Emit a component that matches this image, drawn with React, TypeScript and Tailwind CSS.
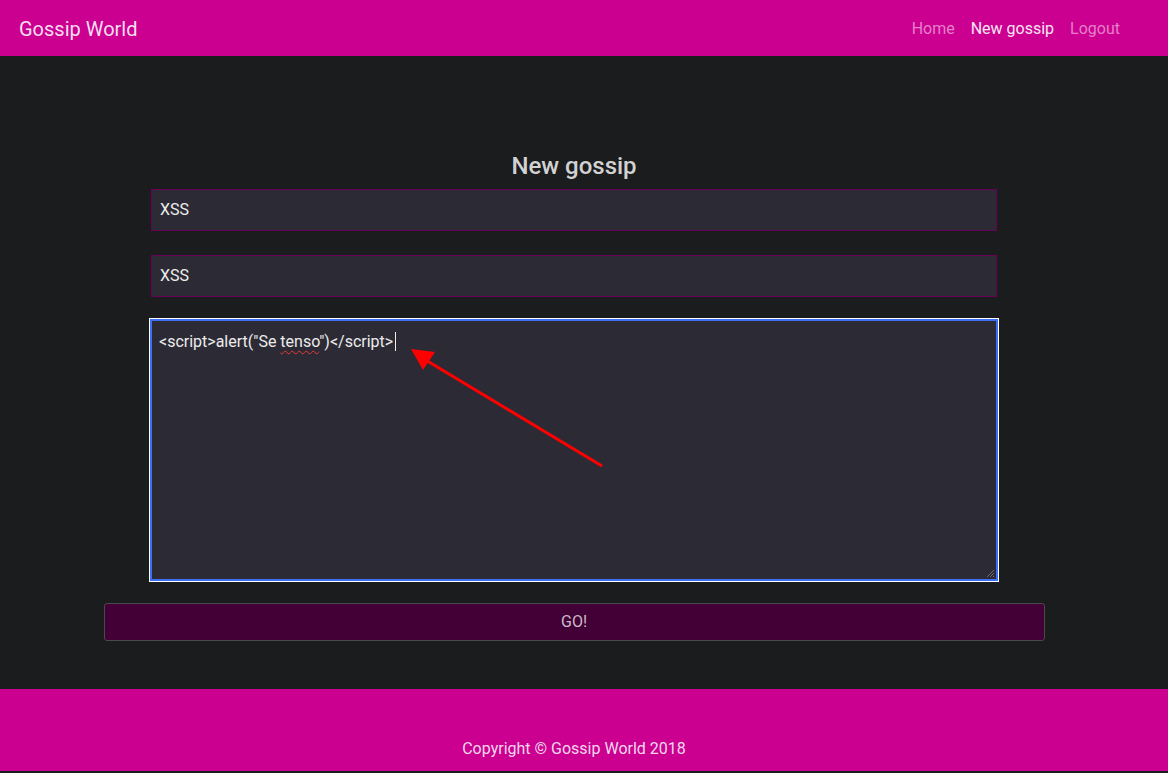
import React from 'react';

const NavBar = () => (
  <nav className="h-[56px] bg-[#cc0090] flex items-center pl-[19px] pr-[40px] pt-[1px]">
    <span className="text-[20px] text-[#f6def0]">Gossip World</span>
    <div className="ml-auto flex items-center text-[16px] pt-[1px]">
      <a className="px-2 text-[#e47fca]">Home</a>
      <a className="px-2 text-[#f8e6f3]">New gossip</a>
      <a className="px-2 text-[#e47fca]">Logout</a>
    </div>
  </nav>
);

const GossipForm = () => (
  <main className="w-[1148px] h-[633px] pt-[96px] flex flex-col items-center">
    <h2 className="text-[24px] leading-[28px] font-medium text-[#d2d2d2]">New gossip</h2>
    <div className="mt-[9px] w-[846px] flex flex-col">
      <div className="h-[42px] bg-[#2c2b35] border border-[#680058] flex items-center px-2 text-[16px] text-[#ececec]">XSS</div>
      <div className="mt-[24px] h-[42px] bg-[#2c2b35] border border-[#680058] flex items-center px-2 text-[16px] text-[#ececec]">XSS</div>

      {/* focused textarea */}
      <div className="relative mt-[23px] h-[260px] bg-[#2c2b35] border border-[#3d6ff6] shadow-[0_0_0_1px_#3d6ff6,0_0_0_2px_#ffffff] pl-[7px] pr-2 pt-[9px] text-[16px] text-[#ececec]">
        <span>&lt;script&gt;alert("Se </span>
        <span className="underline decoration-wavy decoration-[#e53935] decoration-1 underline-offset-[3px]">tenso</span>
        <span>")&lt;/script&gt;</span>
        <span className="inline-block w-px h-[19px] bg-[#ececec] align-[-4px] ml-[2px]" />
        <svg className="absolute right-[1px] bottom-[1px]" width="10" height="10" viewBox="0 0 10 10">
          <path d="M9 2 L2 9 M9 5 L5 9 M9 8 L8 9" stroke="#6b6b73" strokeWidth="1" />
        </svg>
        <svg className="absolute left-0 top-0 pointer-events-none" width="846" height="260">
          <line x1="450" y1="145" x2="272" y2="38" stroke="#ff0000" strokeWidth="3" />
          <polygon points="259,28 283,31 271,49" fill="#ff0000" />
        </svg>
      </div>
    </div>
    <button className="mt-[23px] w-[941px] h-[38px] bg-[#420036] border border-[#4a4a4a] rounded-[3px] text-[16px] text-[#cdbcc8]">
      GO!
    </button>
  </main>
);

const Footer = () => (
  <footer className="h-[82px] bg-[#cc0090] flex items-end justify-center pb-[10px] pr-[20px]">
    <p className="text-[16px] text-[#f3d8ec]">Copyright © Gossip World 2018</p>
  </footer>
);

export default function App() {
  return (
    <div className="min-h-[773px] bg-[#1b1c1e] font-['Roboto',sans-serif]">
      <NavBar />
      <GossipForm />
      <Footer />
    </div>
  );
}
